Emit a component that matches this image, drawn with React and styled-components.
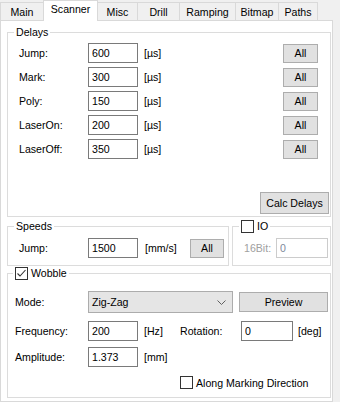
import React from 'react'
import styled, { createGlobalStyle } from 'styled-components'

const tabs = [
    { name: 'Main', w: 44 },
    { name: 'Scanner', w: 55, active: true },
    { name: 'Misc', w: 41 },
    { name: 'Drill', w: 43 },
    { name: 'Ramping', w: 57 },
    { name: 'Bitmap', w: 44 },
    { name: 'Paths', w: 40 },
]

const delays = [
    { label: 'Jump:', value: '600' },
    { label: 'Mark:', value: '300' },
    { label: 'Poly:', value: '150' },
    { label: 'LaserOn:', value: '200' },
    { label: 'LaserOff:', value: '350' },
]

const CheckBox = ({ checked }) => (
    <Box>
        {checked && (
            <svg width="11" height="11" viewBox="0 0 11 11">
                <polyline points="1.5,5.5 4,8 9.5,2" fill="none" stroke="#333" strokeWidth="1.1" />
            </svg>
        )}
    </Box>
)

const App = () => {
    return (
        <Window>
            <GlobalStyle />
            <TabStrip>
                {tabs.map((t, i) => (
                    <Tab key={t.name} $w={t.w} $active={t.active} $first={i === 0}>{t.name}</Tab>
                ))}
            </TabStrip>
            <Page>
                <Group $mt={5}>
                    <Legend $ml={6}>Delays</Legend>
                    <DelayBody>
                        {delays.map(d => (
                            <DelayRow key={d.label}>
                                <Label>{d.label}</Label>
                                <Field $w={50} readOnly value={d.value} />
                                <Unit>[µs]</Unit>
                                <Button $w={35} $h={19}>All</Button>
                            </DelayRow>
                        ))}
                        <CalcButton>Calc Delays</CalcButton>
                    </DelayBody>
                </Group>

                <SplitRow>
                    <Group $w={222}>
                        <Legend $ml={6}>Speeds</Legend>
                        <SmallBody>
                            <SpeedRow>
                                <Label>Jump:</Label>
                                <Field $w={50} readOnly value="1500" />
                                <Unit $pl={7}>[mm/s]</Unit>
                                <Button $w={34} $h={19}>All</Button>
                            </SpeedRow>
                        </SmallBody>
                    </Group>
                    <Group $w={99}>
                        <Legend $ml={6}>
                            <CheckBox />
                            <span>IO</span>
                        </Legend>
                        <SmallBody>
                            <IoRow>
                                <Label $disabled>16Bit:</Label>
                                <Field $w={52} $disabled readOnly value="0" />
                            </IoRow>
                        </SmallBody>
                    </Group>
                </SplitRow>

                <Group $mt={1}>
                    <Legend $ml={5}>
                        <CheckBox checked />
                        <span>Wobble</span>
                    </Legend>
                    <WobbleBody>
                        <ModeRow>
                            <Label>Mode:</Label>
                            <Combo>
                                <span>Zig-Zag</span>
                                <svg width="9" height="5" viewBox="0 0 9 5">
                                    <polyline points="0.5,0.5 4.5,4.5 8.5,0.5" fill="none" stroke="#606060" strokeWidth="1" />
                                </svg>
                            </Combo>
                            <Button $w={89} $h={20}>Preview</Button>
                        </ModeRow>
                        <ParamRow $mt={8}>
                            <Label>Frequency:</Label>
                            <Field $w={50} readOnly value="200" />
                            <Unit>[Hz]</Unit>
                            <Label>Rotation:</Label>
                            <Field $w={52} readOnly value="0" />
                            <Unit $pl={5}>[deg]</Unit>
                        </ParamRow>
                        <ParamRow $mt={6}>
                            <Label>Amplitude:</Label>
                            <Field $w={50} readOnly value="1.373" />
                            <Unit>[mm]</Unit>
                        </ParamRow>
                        <CheckRow>
                            <CheckBox />
                            <span>Along Marking Direction</span>
                        </CheckRow>
                    </WobbleBody>
                </Group>
            </Page>
        </Window>
    )
}

const GlobalStyle = createGlobalStyle`
html, body {
    margin: 0;
    padding: 0;
    background: #f0f0f0;
}
body {
    font-family: "Liberation Sans", Arial, sans-serif;
    font-size: 10.6px;
    color: #000;
}
`;

const Window = styled.div`
width: 340px;
height: 402px;
background: #f0f0f0;
overflow: hidden;
`;

const TabStrip = styled.div`
display: flex;
align-items: flex-end;
height: 20px;
`;

const Tab = styled.div`
box-sizing: border-box;
width: ${p => p.$w}px;
height: ${p => (p.$active ? 21 : 18)}px;
margin-left: ${p => (p.$first ? 0 : -1)}px;
margin-bottom: ${p => (p.$active ? -1 : 0)}px;
padding-bottom: ${p => (p.$active ? 4 : 0)}px;
border: 1px solid #d9d9d9;
border-bottom: none;
background: ${p => (p.$active ? '#fff' : '#f0f0f0')};
position: relative;
z-index: ${p => (p.$active ? 2 : 1)};
display: flex;
align-items: center;
justify-content: center;
`;

const Page = styled.div`
box-sizing: border-box;
width: 333px;
height: 382px;
background: #fff;
border: 1px solid #d9d9d9;
padding: 0 1px 0 6px;
display: flex;
flex-direction: column;
`;

const Group = styled.fieldset`
box-sizing: border-box;
margin: ${p => p.$mt || 0}px 0 0 0;
padding: 0;
min-width: 0;
width: ${p => (p.$w ? `${p.$w}px` : 'auto')};
border: 1px solid #dcdcdc;
`;

const Legend = styled.legend`
display: flex;
align-items: center;
gap: 3px;
height: 13px;
line-height: 13px;
margin-left: ${p => p.$ml}px;
padding: 0 2px;
`;

const DelayBody = styled.div`
display: flex;
flex-direction: column;
gap: 4px;
padding: 4px 0 2px 0;
`;

const DelayRow = styled.div`
display: grid;
grid-template-columns: 69px 50px 1fr 35px;
align-items: center;
height: 20px;
padding: 0 12px 0 11px;
`;

const Label = styled.span`
color: ${p => (p.$disabled ? '#a0a0a0' : '#000')};
white-space: nowrap;
`;

const Field = styled.input`
box-sizing: border-box;
width: ${p => p.$w}px;
height: 20px;
margin: 0;
padding: 0 3px;
border: 1px solid ${p => (p.$disabled ? '#cccccc' : '#7a7a7a')};
background: #fff;
font: inherit;
color: ${p => (p.$disabled ? '#7f8a9c' : '#000')};
outline: none;
`;

const Unit = styled.span`
padding-left: ${p => p.$pl || 6}px;
white-space: nowrap;
`;

const Button = styled.div`
box-sizing: border-box;
width: ${p => p.$w}px;
height: ${p => p.$h}px;
background: #e1e1e1;
border: 1px solid #adadad;
display: flex;
align-items: center;
justify-content: center;
`;

const CalcButton = styled(Button)`
width: 69px;
height: 22px;
align-self: flex-end;
margin: 29px 1px 0 0;
`;

const SplitRow = styled.div`
display: flex;
gap: 3px;
margin-top: 3px;
`;

const SmallBody = styled.div`
padding: 5px 0 7px 11px;
`;

const SpeedRow = styled.div`
display: grid;
grid-template-columns: 69px 50px 52px 34px;
align-items: center;
height: 20px;
`;

const IoRow = styled.div`
display: grid;
grid-template-columns: 32px 52px;
align-items: center;
height: 20px;
`;

const Box = styled.span`
box-sizing: border-box;
width: 13px;
height: 13px;
border: 1px solid #333;
background: #fff;
display: flex;
align-items: center;
justify-content: center;
flex-shrink: 0;
`;

const WobbleBody = styled.div`
display: flex;
flex-direction: column;
padding: 11px 0 8px 7px;
`;

const ModeRow = styled.div`
display: grid;
grid-template-columns: 73px 145px 89px;
align-items: center;
height: 22px;
& > :last-child {
    margin-left: 6px;
}
`;

const Combo = styled.div`
box-sizing: border-box;
height: 22px;
background: #e5e5e5;
border: 1px solid #acacac;
display: flex;
align-items: center;
justify-content: space-between;
padding: 0 6px 0 3px;
`;

const ParamRow = styled.div`
display: grid;
grid-template-columns: 73px 50px 42px 61px 52px auto;
align-items: center;
height: 20px;
margin-top: ${p => p.$mt}px;
`;

const CheckRow = styled.div`
display: flex;
align-items: center;
gap: 3px;
margin-top: 9px;
padding-left: 165px;
height: 13px;
`;

export default App
